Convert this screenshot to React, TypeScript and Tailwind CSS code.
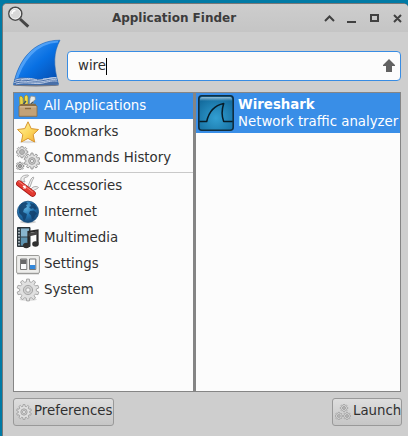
import type { ReactNode } from 'react';

function gearPath(cx: number, cy: number, outer: number, inner: number, teeth = 8) {
  const points: string[] = [];
  const step = (Math.PI * 2) / teeth;
  for (let i = 0; i < teeth; i++) {
    const a = i * step - Math.PI / 2;
    const corners: [number, number][] = [
      [a - step * 0.32, inner],
      [a - step * 0.2, outer],
      [a + step * 0.2, outer],
      [a + step * 0.32, inner],
    ];
    for (const [angle, r] of corners) {
      points.push(`${(cx + Math.cos(angle) * r).toFixed(2)} ${(cy + Math.sin(angle) * r).toFixed(2)}`);
    }
  }
  return `M${points.join('L')}Z`;
}

function Gear({ cx, cy, r, teeth = 8, stroke = '#a0a0a0' }: { cx: number; cy: number; r: number; teeth?: number; stroke?: string }) {
  return (
    <g stroke={stroke} strokeWidth="0.9" strokeLinejoin="round">
      <path d={gearPath(cx, cy, r, r * 0.76, teeth)} fill="#e0e0e0" />
      <circle cx={cx} cy={cy} r={r * 0.42} fill="#cfcfcf" />
      <circle cx={cx} cy={cy} r={r * 0.2} fill="#f4f4f4" />
    </g>
  );
}

function Icon({ children }: { children: ReactNode }) {
  return <svg className="size-6 shrink-0" viewBox="0 0 24 24" fill="none">{children}</svg>;
}

const AllIcon = () => (
  <Icon>
    <path d="M4 13 3.5 3 5 2l2 2 .5 9Z" fill="#e8d44c" stroke="#a88e10" strokeWidth=".7" />
    <path d="M8.5 13V2.5L10.3 1 12 2.5V13Z" fill="#f1dc4a" stroke="#9c8314" strokeWidth=".7" />
    <path d="m13 13 1-9 1-2 4 .5.5 3-2 1.5-1 6Z" fill="#e9ebe7" stroke="#8b8d88" strokeWidth=".8" />
    <path d="m6 12 4-5m3 5 4-4" stroke="#3d5361" strokeWidth="1.4" />
    <path d="m4.5 10 15-.2 1.5 3H3Z" fill="#886c43" />
    <path d="M3 12h18v10.3H3Z" fill="#c3a277" stroke="#8f6d3c" strokeWidth=".8" />
    <path d="M3.8 12.8h16.4" stroke="#dfc8a5" />
    <path d="M9 14.5h6" stroke="#8c6c42" strokeWidth="1.4" />
  </Icon>
);

const StarIcon = () => (
  <Icon>
    <defs>
      <linearGradient id="star" x1="0" y1="0" x2="1" y2="1">
        <stop stopColor="#fff5a5" /><stop offset=".55" stopColor="#fcd65b" /><stop offset="1" stopColor="#f0a534" />
      </linearGradient>
    </defs>
    <ellipse cx="12" cy="22" rx="9" ry="1.2" fill="#ddd" />
    <path d="m12 1.8 3.2 6.8 7.3.9-5.3 5.1 1.4 7.4-6.6-3.6L5.4 22l1.4-7.4L1.5 9.5l7.3-.9Z" fill="url(#star)" stroke="#d7952f" strokeLinejoin="round" />
  </Icon>
);

const HistoryIcon = () => (
  <Icon>
    <Gear cx={6} cy={6} r={5.8} stroke="#909090" />
    <Gear cx={4} cy={20} r={4} stroke="#858585" />
    <Gear cx={16} cy={15} r={8} teeth={10} stroke="#949494" />
  </Icon>
);

const KnifeIcon = () => (
  <Icon>
    <path d="M5 7C4 3 7 1 12 1c1.500 .8-.5 2-3 2.500C7.500 4 8 6 9 8ZM12 12l3-7 2-2c1.500 0 .5 2-.5 3L14 13ZM15 15c2-3 6-3 7.500-1.500C21 15.500 19 15 17 17Z" fill="#eee" stroke="#9a9a9a" strokeWidth=".8" />
    <path d="m3.200 9.500 13.500 10.200" stroke="#a51512" strokeWidth="6.200" strokeLinecap="round" />
    <path d="m3.300 9.300 13.400 10.200" stroke="#e33b32" strokeWidth="4.800" strokeLinecap="round" />
    <path d="m2.800 7.500 13.700 10.300" stroke="#f58478" strokeWidth="1" strokeLinecap="round" />
    <path d="m7 12 3 2.300M9.400 11.600l-1.800 3" stroke="white" strokeWidth="1.200" />
  </Icon>
);

const GlobeIcon = () => (
  <Icon>
    <defs>
      <radialGradient id="globe" cx=".4" cy=".3" r=".7">
        <stop stopColor="#5fb2df" /><stop offset=".55" stopColor="#2374b1" /><stop offset="1" stopColor="#164a7b" />
      </radialGradient>
    </defs>
    <ellipse cx="12" cy="22" rx="8" ry="1.500" fill="#ccc" />
    <circle cx="12" cy="11.800" r="10.600" fill="url(#globe)" stroke="#174e7e" strokeWidth=".8" />
    <path d="m3 7 3-4 4-1 2 2-2 1 1 2-3 2-1 3 4 2-1 4-2 3-2-5-3-3ZM14 3l4 1 3 4-2 2-2-2-2 1-2-2 2-1Zm0 8 4-.5 3 3-2 2-1 3-2 1-1-4-2-2Z" fill="#123f6b" opacity=".85" />
  </Icon>
);

const MediaIcon = () => (
  <Icon>
    <path d="M1.500 1.500h12.500v19H1.500Z" fill="#34444d" stroke="#293237" />
    <path d="M5 2.500h8v8H5Z" fill="#88b5ce" />
    <path d="M5 11.500h8v8H5Z" fill="#5d93b0" />
    <path d="M3 3v17" stroke="#c6d0d4" strokeWidth="1.500" strokeDasharray="1.500 1.500" />
    <path d="M12.500 18V6l9-1.500v12.800" stroke="#292929" strokeWidth="2.200" />
    <path d="M12.500 7.300 21.500 5.500v3l-9 2Z" fill="#444" />
    <ellipse cx="10.300" cy="19.500" rx="3.300" ry="2.700" fill="#303030" />
    <ellipse cx="19.500" cy="18" rx="3.300" ry="2.700" fill="#303030" />
  </Icon>
);

const SettingsIcon = () => (
  <Icon>
    <rect x=".6" y="3.500" width="22.800" height="17.800" rx="1.200" fill="#ededeb" stroke="#9b9b98" />
    <path d="M1 21.800h22" stroke="#888" strokeWidth=".7" />
    <path d="M4.500 7h6.300v10.500H4.500ZM13.500 7h6.300v10.500h-6.300Z" fill="#fafafa" stroke="#777" />
    <path d="M5 7.500h5.300v4.500H5Z" fill="#686868" />
    <path d="M14 13h5.300v4H14Z" fill="#3288dc" />
  </Icon>
);

const SystemIcon = () => (
  <Icon>
    <ellipse cx="12" cy="21.500" rx="9" ry="1.500" fill="#ddd" />
    <Gear cx={12} cy={12} r={11} teeth={10} />
  </Icon>
);

const groups: { label: string; icon: () => ReactNode; spacing?: string }[][] = [
  [
    { label: 'All Applications', icon: AllIcon },
    { label: 'Bookmarks', icon: StarIcon },
    { label: 'Commands History', icon: HistoryIcon },
  ],
  [
    { label: 'Accessories', icon: KnifeIcon },
    { label: 'Internet', icon: GlobeIcon },
    { label: 'Multimedia', icon: MediaIcon },
    { label: 'Settings', icon: SettingsIcon },
    { label: 'System', icon: SystemIcon },
  ],
];

function SearchLogo() {
  return (
    <svg className="size-6" viewBox="0 0 24 24" fill="none">
      <path d="m13 13 8.300 7.700" stroke="#454545" strokeWidth="3" />
      <circle cx="8.300" cy="7.700" r="6.500" fill="#d8d8d8" stroke="#4c4c4c" strokeWidth="1.500" />
      <circle cx="8.300" cy="7.700" r="5.200" stroke="#f0f0f0" />
      <path d="M5 8c0-2 1.500-3.500 3.500-3.500" stroke="white" strokeWidth="1.500" />
    </svg>
  );
}

function FinLogo() {
  return (
    <svg className="h-12 w-12 shrink-0" viewBox="0 0 48 48" fill="none">
      <defs>
        <linearGradient id="fin" x1=".1" y1=".1" x2=".9" y2="1">
          <stop stopColor="#4098f4" /><stop offset=".5" stopColor="#0870e3" /><stop offset="1" stopColor="#064aab" />
        </linearGradient>
        <clipPath id="fin-shape"><path d="M.5 45.800C5 22 20 1 47 1.200c-6.500 12-7 24-1.500 44.300Z" /></clipPath>
      </defs>
      <ellipse cx="23" cy="46.200" rx="23" ry="1.200" fill="#777b86" />
      <path d="M.5 45.800C5 22 20 1 47 1.200c-6.500 12-7 24-1.500 44.300Z" fill="url(#fin)" />
      <g clipPath="url(#fin-shape)">
        <path d="M2 44C8 22 22 3 45 2" stroke="#69b2ff" strokeWidth="3" opacity=".65" />
        <path d="M0 41c10-5 18-1 27-1s13-3 21-1v8H0Z" fill="#496fa8" />
        <path d="M0 42c11-5 18 1 28-1s14-3 20-2M0 44c9-4 18 0 27-1s13-4 21-2M3 45c11-3 19 1 27-1s11-3 18-1M8 41c8-3 12-1 16 0m6-1c5 0 9-2 15-1" stroke="#c5d4eb" strokeWidth=".9" />
      </g>
      <path d="M.5 45.800C5 22 20 1 47 1.200c-6.500 12-7 24-1.500 44.300" stroke="#2467b5" strokeWidth=".6" />
    </svg>
  );
}

function WiresharkIcon() {
  return (
    <svg className="size-9 shrink-0" viewBox="0 0 36 36" fill="none">
      <defs>
        <radialGradient id="water" cx=".5" cy=".65" r=".65"><stop stopColor="#329fd2" /><stop offset="1" stopColor="#146c9e" /></radialGradient>
        <linearGradient id="gloss" x1="0" y1="0" x2="0" y2="1"><stop stopColor="white" stopOpacity=".55" /><stop offset="1" stopColor="white" stopOpacity="0" /></linearGradient>
      </defs>
      <rect x=".8" y=".8" width="34.400" height="34.400" rx="3" fill="url(#water)" stroke="#102e40" strokeWidth="1.600" />
      <path d="M2 4c0-1 1-2 2-2h28c1 0 2 1 2 2v2H2Z" fill="url(#gloss)" />
      <path d="M1.500 26.500h7.200c2-9 6.800-16 17-18-2.300 7-2.300 12 0 18h9" stroke="#071c28" strokeWidth="1.500" strokeLinejoin="round" />
    </svg>
  );
}

export default function App() {
  return (
    <div className="h-[436px] w-[408px] overflow-hidden bg-[#007aa5] pt-[3px] pl-[2px] font-['DejaVu_Sans',sans-serif] text-[13.33px] text-[#303030]">
      <main className="flex h-[433px] w-[406px] flex-col rounded-t-[5px] border-t border-l border-[#777] bg-[#cecece]">
        <header className="flex h-7 shrink-0 items-center rounded-t-[4px] bg-gradient-to-b from-[#cdcdcd] to-[#c5c5c5] pl-1">
          <SearchLogo />
          <h1 className="ml-20 w-[126px] text-center text-[12px] font-bold whitespace-nowrap text-[#3c3c3c]">Application Finder</h1>
          <svg className="ml-auto h-7 w-[90px]" viewBox="0 0 90 28" fill="none" stroke="#414141" strokeWidth="2">
            <path d="m7 17 4.500-4.500L16 17M29 18h9M53 11h7v6h-7ZM76 11l7 7m0-7-7 7" />
          </svg>
        </header>

        <section className="mt-[7px] ml-[10px] flex h-12 shrink-0 items-start">
          <FinLogo />
          <label className="mt-3 ml-[6px] flex h-[30px] w-[334px] items-center rounded-[4px] border border-[#388ce3] bg-[#fcfcfc] pl-[10px]">
            <span>wire</span><span className="h-[17px] w-px bg-black" />
            <svg className="mr-[5px] ml-auto h-[14px] w-3" viewBox="0 0 12 14"><path d="m6 0 6 6v1H9v6H3V7H0V6Z" fill="#626262" /></svg>
          </label>
        </section>

        <div className="mt-[5px] ml-[10px] flex h-[300px] w-[388px] shrink-0 border border-[#858585] bg-[#858585]">
          <nav className="w-[179px] bg-[#fcfcfc]">
            {groups.map((items, group) => (
              <div key={group} className={group === 0 ? 'border-b border-[#c9c9c9] pb-px' : ''}>
                {items.map(({ label, icon: ItemIcon }) => (
                  <div key={label} className={`flex h-[26px] items-center gap-1 pl-[2px] whitespace-nowrap ${label === 'All Applications' ? 'bg-[#398ee7] text-white' : ''}`}>
                    <ItemIcon /><span className="-mt-px">{label}</span>
                  </div>
                ))}
              </div>
            ))}
          </nav>
          <section className="ml-[3px] min-w-0 flex-1 bg-[#fcfcfc]">
            <div className="flex h-10 items-center gap-1 bg-[#398ee7] pl-[2px] text-white">
              <WiresharkIcon />
              <div className="leading-[17px] whitespace-nowrap"><strong>Wireshark</strong><p>Network traffic analyzer</p></div>
            </div>
          </section>
        </div>

        <footer className="mt-[6px] mr-[6px] ml-[10px] flex justify-between">
          <button className="flex h-7 w-[101px] items-center gap-[2px] rounded-[3px] border border-[#999] bg-gradient-to-b from-[#dedede] to-[#c6c6c6] pl-[2px]">
            <svg className="size-4 shrink-0" viewBox="0 0 16 16"><Gear cx={8} cy={8} r={7.5} teeth={10} /></svg><span className="-mt-0.5">Preferences</span>
          </button>
          <button className="flex h-7 w-[70px] items-center gap-[2px] rounded-[3px] border border-[#999] bg-gradient-to-b from-[#dedede] to-[#c6c6c6] pl-[2px]">
            <svg className="size-4 shrink-0" viewBox="0 0 16 16"><Gear cx={9} cy={4} r={3.8} /><Gear cx={3.8} cy={12} r={3.7} /><Gear cx={12} cy={12} r={3.7} /></svg><span className="-mt-0.5">Launch</span>
          </button>
        </footer>
      </main>
    </div>
  );
}
